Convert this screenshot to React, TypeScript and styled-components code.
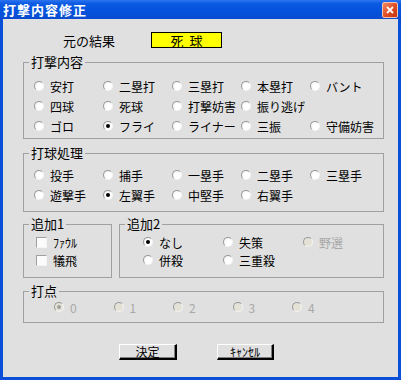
import React from 'react';
import styled, { createGlobalStyle } from 'styled-components';

const GlobalStyle = createGlobalStyle`
    html, body {
        margin: 0;
        padding: 0;
        background: #ffffff;
    }
    body {
        font-family: "Noto Sans CJK JP", "DejaVu Sans", sans-serif;
        font-size: 12px;
        color: #000;
    }
`;

const Window = styled.div`
    width: 401px;
    height: 380px;
    display: flex;
    flex-direction: column;
    background: #0a4fd8;
    box-sizing: border-box;
`;

const TitleBar = styled.div`
    height: 19px;
    flex: none;
    display: flex;
    align-items: center;
    justify-content: space-between;
    padding: 0 3px 0 3px;
    background: linear-gradient(to bottom, #2d74f0 0%, #0a5ae2 20%, #0552dc 60%, #0a4bd0 100%);
    color: #fff;
    font-weight: bold;
    font-size: 13px;
    letter-spacing: 1px;
`;

const CloseButton = styled.div`
    width: 14px;
    height: 14px;
    border-radius: 2px;
    border: 1px solid #f4c2b0;
    background: linear-gradient(135deg, #f08a66 0%, #dd4c22 55%, #c2360f 100%);
    display: flex;
    align-items: center;
    justify-content: center;
    margin-top: 1px;
`;

const Body = styled.div`
    flex: 1;
    margin: 0 3px 3px 3px;
    background: #e0e0e0;
    padding: 13px 14px 0 20px;
`;

const ResultRow = styled.div`
    display: flex;
    align-items: center;
    height: 16px;
    padding-left: 40px;
    font-size: 13px;
`;

const ResultLabel = styled.span`
    width: 88px;
`;

const ResultBox = styled.div`
    width: 69px;
    height: 14px;
    border: 1px solid #000;
    background: #ffff00;
    display: flex;
    align-items: center;
    justify-content: center;
    gap: 6px;
    font-size: 13px;
`;

const Group = styled.div<{ $top: number; $pt: number; $pb: number; $pl: number; $w?: number; $grow?: boolean }>`
    position: relative;
    box-sizing: border-box;
    margin-top: ${(p) => p.$top}px;
    border: 1px solid #a0a0a0;
    padding: ${(p) => p.$pt}px 0 ${(p) => p.$pb}px ${(p) => p.$pl}px;
    ${(p) => (p.$w ? `width: ${p.$w}px; flex: none;` : '')}
    ${(p) => (p.$grow ? 'flex: 1;' : '')}
`;

const Legend = styled.span`
    position: absolute;
    left: 5px;
    top: -9px;
    padding: 0 2px;
    line-height: 16px;
    background: #e0e0e0;
    font-size: 13px;
`;

const Grid = styled.div<{ $cols: number; $col: number; $row: number }>`
    display: grid;
    grid-template-columns: repeat(${(p) => p.$cols}, ${(p) => p.$col}px);
    grid-auto-rows: ${(p) => p.$row}px;
`;

const Option = styled.div<{ $disabled?: boolean }>`
    display: flex;
    align-items: center;
    gap: 4px;
    white-space: nowrap;
    color: ${(p) => (p.$disabled ? '#a8a8a8' : '#000')};
`;

const RadioCircle = styled.span<{ $disabled?: boolean }>`
    width: 8px;
    height: 8px;
    flex: none;
    border-radius: 50%;
    border: 1px solid;
    border-color: #9a9a9a #f4f4f4 #f4f4f4 #9a9a9a;
    background: ${(p) => (p.$disabled ? '#e4e2d6' : 'radial-gradient(circle at 60% 60%, #ffffff 40%, #e8e8e8 100%)')};
    display: flex;
    align-items: center;
    justify-content: center;
    margin-right: 2px;
`;

const Dot = styled.span<{ $disabled?: boolean }>`
    width: 4px;
    height: 4px;
    border-radius: 50%;
    background: ${(p) => (p.$disabled ? '#a0a0a0' : '#000')};
`;

const CheckBox = styled.span`
    width: 9px;
    height: 9px;
    flex: none;
    border: 1px solid;
    border-color: #a0a0a0 #f4f4f4 #f4f4f4 #a0a0a0;
    background: #fbfbfb;
    margin-right: 2px;
`;

const SplitRow = styled.div`
    display: flex;
    gap: 7px;
`;

const ButtonRow = styled.div`
    display: flex;
    gap: 40px;
    margin-top: 21px;
    padding-left: 96px;
`;

const Button = styled.div<{ $w: number }>`
    width: ${(p) => p.$w}px;
    height: 16px;
    box-sizing: border-box;
    border-top: 1px solid #ffffff;
    border-left: 1px solid #ffffff;
    border-right: 2px solid #000;
    border-bottom: 2px solid #000;
    box-shadow: inset -1px -1px 0 #808080;
    background: #e0e0e0;
    display: flex;
    align-items: center;
    justify-content: center;
    font-size: 12px;
    white-space: nowrap;
`;

type Item = { label: string; checked?: boolean; disabled?: boolean };

const Radio = ({ label, checked, disabled }: Item) => (
    <Option $disabled={disabled}>
        <RadioCircle $disabled={disabled}>{checked ? <Dot $disabled={disabled} /> : null}</RadioCircle>
        {label}
    </Option>
);

const battingItems: Item[] = [
    { label: '安打' },
    { label: '二塁打' },
    { label: '三塁打' },
    { label: '本塁打' },
    { label: 'バント' },
    { label: '四球' },
    { label: '死球' },
    { label: '打撃妨害' },
    { label: '振り逃げ' },
    { label: '' },
    { label: 'ゴロ' },
    { label: 'フライ', checked: true },
    { label: 'ライナー' },
    { label: '三振' },
    { label: '守備妨害' },
];

const fielderItems: Item[] = [
    { label: '投手' },
    { label: '捕手' },
    { label: '一塁手' },
    { label: '二塁手' },
    { label: '三塁手' },
    { label: '遊撃手' },
    { label: '左翼手', checked: true },
    { label: '中堅手' },
    { label: '右翼手' },
];

const extra2Items: Item[] = [
    { label: 'なし', checked: true },
    { label: '失策' },
    { label: '野選', disabled: true },
    { label: '併殺' },
    { label: '三重殺' },
];

const rbiItems: Item[] = ['0', '1', '2', '3', '4'].map((n, i) => ({
    label: n,
    disabled: true,
    checked: i === 0,
}));

export default function App() {
    return (
        <>
            <GlobalStyle />
            <Window>
                <TitleBar>
                    <span>打撃内容修正</span>
                    <CloseButton>
                        <svg width="8" height="8" viewBox="0 0 8 8">
                            <path d="M1 1 L7 7 M7 1 L1 7" stroke="#fff" strokeWidth="1.8" />
                        </svg>
                    </CloseButton>
                </TitleBar>
                <Body>
                    <ResultRow>
                        <ResultLabel>元の結果</ResultLabel>
                        <ResultBox>
                            <span>死</span>
                            <span>球</span>
                        </ResultBox>
                    </ResultRow>

                    <Group $top={14} $pt={13} $pb={2} $pl={10}>
                        <Legend>打撃内容</Legend>
                        <Grid $cols={5} $col={69} $row={20}>
                            {battingItems.map((it, i) =>
                                it.label ? <Radio key={i} {...it} /> : <span key={i} />
                            )}
                        </Grid>
                    </Group>

                    <Group $top={14} $pt={11} $pb={6} $pl={10}>
                        <Legend>打球処理</Legend>
                        <Grid $cols={5} $col={69} $row={20}>
                            {fielderItems.map((it, i) => (
                                <Radio key={i} {...it} />
                            ))}
                        </Grid>
                    </Group>

                    <SplitRow>
                        <Group $top={12} $pt={8} $pb={8} $pl={12} $w={89}>
                            <Legend>追加1</Legend>
                            <Grid $cols={1} $col={74} $row={18}>
                                <Option>
                                    <CheckBox />
                                    ﾌｧｳﾙ
                                </Option>
                                <Option>
                                    <CheckBox />
                                    犠飛
                                </Option>
                            </Grid>
                        </Group>
                        <Group $top={12} $pt={8} $pb={8} $pl={23} $grow>
                            <Legend>追加2</Legend>
                            <Grid $cols={3} $col={80} $row={18}>
                                {extra2Items.map((it, i) => (
                                    <Radio key={i} {...it} />
                                ))}
                            </Grid>
                        </Group>
                    </SplitRow>

                    <Group $top={13} $pt={6} $pb={6} $pl={30}>
                        <Legend>打点</Legend>
                        <Grid $cols={5} $col={59.5} $row={18}>
                            {rbiItems.map((it, i) => (
                                <Radio key={i} {...it} />
                            ))}
                        </Grid>
                    </Group>

                    <ButtonRow>
                        <Button $w={58}>決定</Button>
                        <Button $w={57}>ｷｬﾝｾﾙ</Button>
                    </ButtonRow>
                </Body>
            </Window>
        </>
    );
}
